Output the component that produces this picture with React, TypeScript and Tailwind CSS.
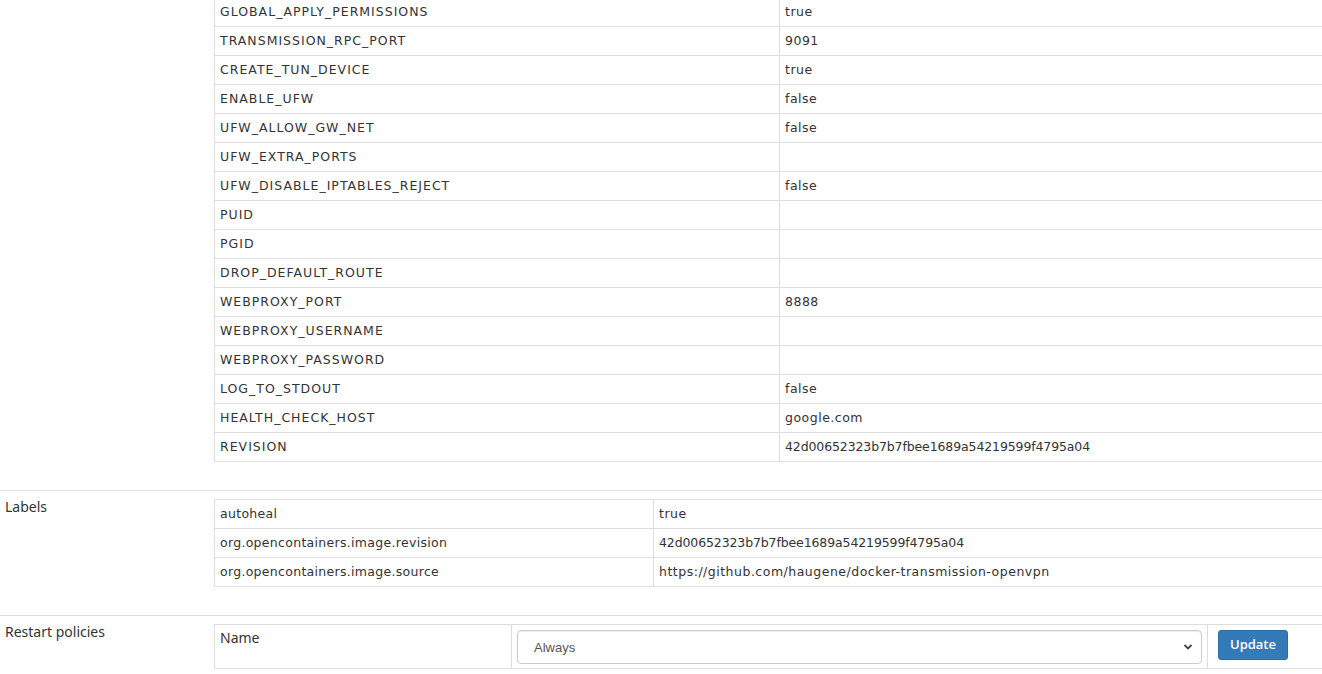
import React from 'react';

const envRows: [string, string][] = [
  ['GLOBAL_APPLY_PERMISSIONS', 'true'],
  ['TRANSMISSION_RPC_PORT', '9091'],
  ['CREATE_TUN_DEVICE', 'true'],
  ['ENABLE_UFW', 'false'],
  ['UFW_ALLOW_GW_NET', 'false'],
  ['UFW_EXTRA_PORTS', ''],
  ['UFW_DISABLE_IPTABLES_REJECT', 'false'],
  ['PUID', ''],
  ['PGID', ''],
  ['DROP_DEFAULT_ROUTE', ''],
  ['WEBPROXY_PORT', '8888'],
  ['WEBPROXY_USERNAME', ''],
  ['WEBPROXY_PASSWORD', ''],
  ['LOG_TO_STDOUT', 'false'],
  ['HEALTH_CHECK_HOST', 'google.com'],
  ['REVISION', '42d00652323b7b7fbee1689a54219599f4795a04'],
];

const labelRows: [string, string][] = [
  ['autoheal', 'true'],
  ['org.opencontainers.image.revision', '42d00652323b7b7fbee1689a54219599f4795a04'],
  ['org.opencontainers.image.source', 'https://github.com/haugene/docker-transmission-openvpn'],
];

const isHash = (s: string) => /^[0-9a-f]{40}$/.test(s);

const KeyValueTable: React.FC<{ rows: [string, string][]; keyWidth: string; keyTracking: string }> = ({
  rows,
  keyWidth,
  keyTracking,
}) => (
  <div className="border-t border-l border-[#ddd] font-['DejaVu_Sans',sans-serif] text-[12.5px] text-[#333]">
    {rows.map(([k, v]) => (
      <div key={k} className="flex h-[29px] border-b border-[#ddd]">
        <div className={`${keyWidth} ${keyTracking} shrink-0 pl-[5px] flex items-center whitespace-nowrap`}>{k}</div>
        <div
          className={`flex-1 border-l border-[#ddd] pl-[5px] flex items-center whitespace-nowrap ${
            isHash(v) ? 'tracking-[-0.12px]' : 'tracking-[0.5px]'
          }`}
        >
          {v}
        </div>
      </div>
    ))}
  </div>
);

export default function App() {
  return (
    <div className="w-[1322px] h-[674px] overflow-hidden bg-white text-[#333] font-['Noto_Sans',sans-serif] text-[14px]">
      <div className="-mt-[3px]">
        {/* environment row */}
        <div className="flex pb-[28px]">
          <div className="w-[209px] shrink-0" />
          <div className="flex-1 pl-[5px]">
            <KeyValueTable rows={envRows} keyWidth="w-[564px]" keyTracking="tracking-[1px]" />
          </div>
        </div>

        {/* labels row */}
        <div className="flex border-t border-[#ddd] pt-[8px] pb-[28px]">
          <div className="w-[209px] shrink-0 pl-[5px] -mt-[2px] leading-[20px]">Labels</div>
          <div className="flex-1 pl-[5px]">
            <KeyValueTable rows={labelRows} keyWidth="w-[438px]" keyTracking="tracking-[0.3px]" />
          </div>
        </div>

        {/* restart policies row */}
        <div className="flex border-t border-[#ddd] pt-[8px]">
          <div className="w-[209px] shrink-0 pl-[5px] -mt-[2px] leading-[20px]">Restart policies</div>
          <div className="flex-1 pl-[5px]">
            <div className="flex h-[45px] border-t border-l border-b border-[#ddd]">
              <div className="w-[296px] shrink-0 pl-[5px] pt-[4px] leading-[18px]">Name</div>
              <div className="w-[696px] shrink-0 border-l border-[#ddd] p-[5px]">
                <div className="relative h-[34px] rounded-[4px] border border-[#ccc] bg-white shadow-[inset_0_1px_1px_rgba(0,0,0,0.075)] flex items-center pl-[16px] pt-[1px] font-['Liberation_Sans',sans-serif] text-[13px] text-[#555]">
                  Always
                  <svg className="absolute right-[8px] top-[12px]" width="10" height="8" viewBox="0 0 10 8">
                    <path d="M1.5 2 L5 5.5 L8.5 2" fill="none" stroke="#444" strokeWidth="1.8" />
                  </svg>
                </div>
              </div>
              <div className="flex-1 border-l border-[#ddd] pl-[10px] pt-[5px]">
                <button className="w-[70px] h-[30px] rounded-[3px] border border-[#2e6da4] bg-[#337ab7] pb-[2px] text-white font-['Open_Sans',sans-serif] font-semibold text-[13px] leading-none">
                  Update
                </button>
              </div>
            </div>
          </div>
        </div>
      </div>
    </div>
  );
}
